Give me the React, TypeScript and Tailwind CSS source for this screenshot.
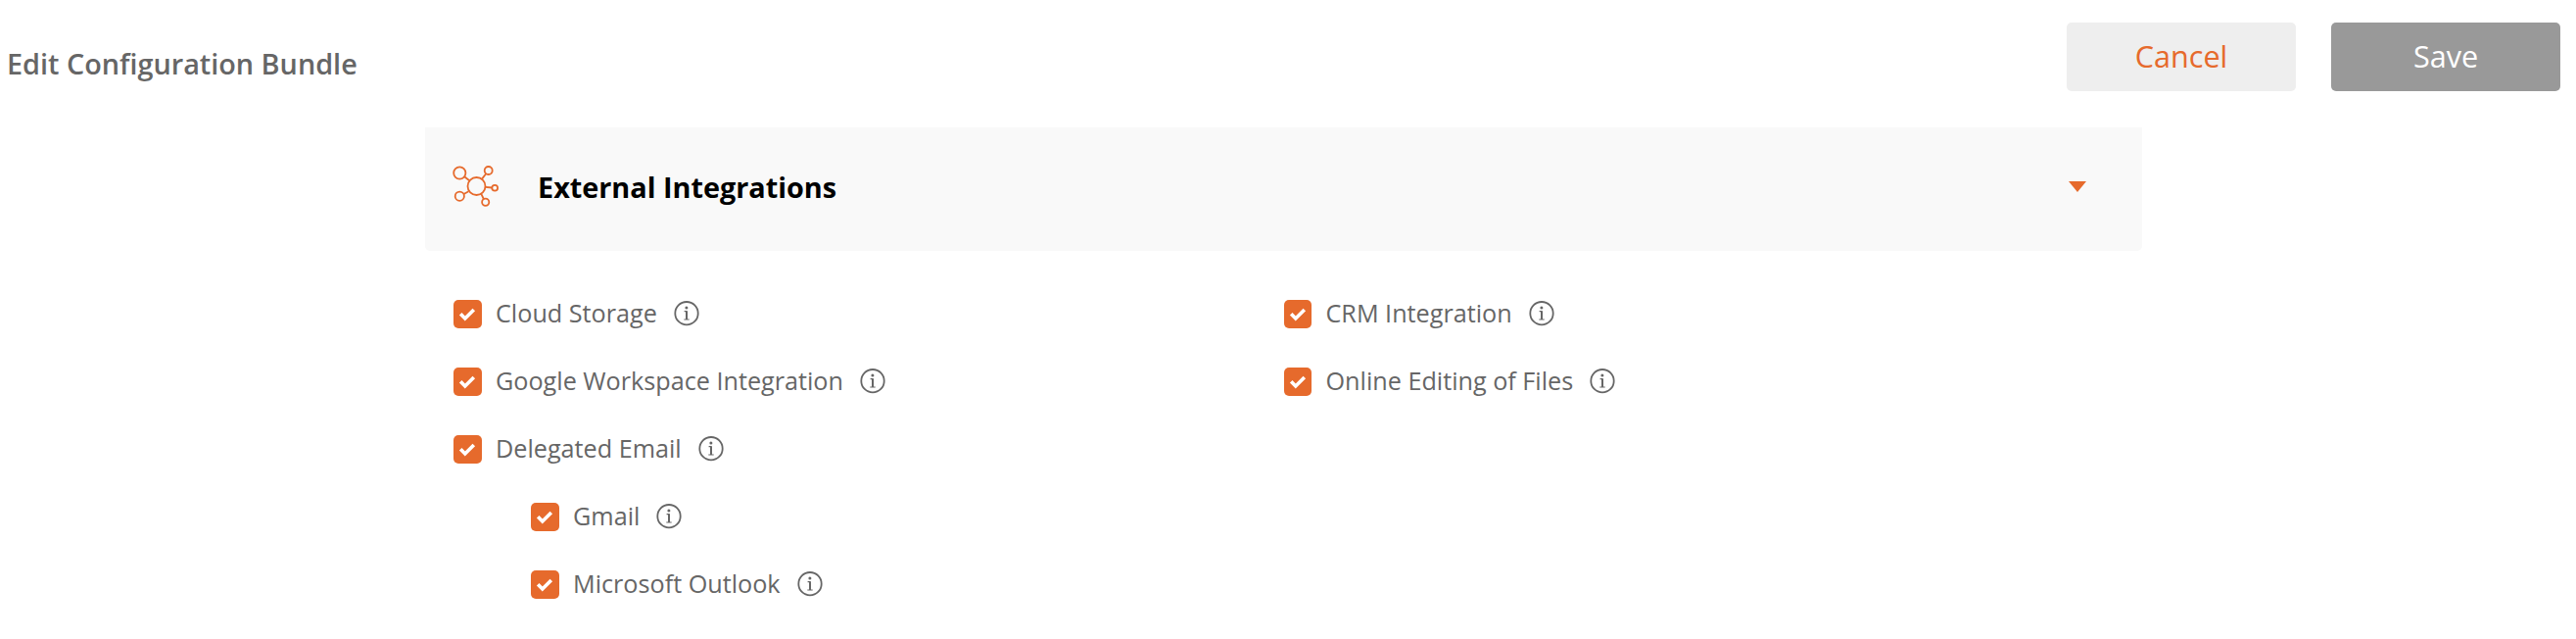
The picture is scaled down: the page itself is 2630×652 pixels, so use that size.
type Feature = { label: string; nested?: boolean };

const leftFeatures: Feature[] = [
  { label: "Cloud Storage" },
  { label: "Google Workspace Integration" },
  { label: "Delegated Email" },
  { label: "Gmail", nested: true },
  { label: "Microsoft Outlook", nested: true },
];

const rightFeatures: Feature[] = [
  { label: "CRM Integration" },
  { label: "Online Editing of Files" },
];

function IntegrationsIcon() {
  return (
    <svg className="mb-[2px]" width="48" height="42" viewBox="0 0 48 42" fill="none" stroke="#e66a2c" strokeWidth="1.8">
      <circle cx="24.5" cy="21" r="9" />
      <circle cx="7.3" cy="7.5" r="6.1" />
      <circle cx="36.7" cy="5" r="4" />
      <circle cx="43.2" cy="22.8" r="2.9" />
      <circle cx="33.7" cy="37.2" r="3.6" />
      <circle cx="7.3" cy="31.2" r="4.6" />
      <path d="M12.2 11.3l5 3.9M34.2 8.2l-4.2 5.4M33.5 21.8l6.8.7M29.2 28.7l2.6 5.3M11.5 29l5-2.7" />
    </svg>
  );
}

function InfoIcon() {
  return (
    <svg className="shrink-0" width="26" height="26" viewBox="0 0 26 26" fill="none" stroke="#666666">
      <circle cx="13" cy="12.7" r="11.7" strokeWidth="1.8" />
      <circle cx="12.9" cy="6.9" r="1.5" fill="#666666" stroke="none" />
      <path d="M13 10.2v8.8" strokeWidth="2" />
      <path d="M10.6 10.6h2.6M10.3 19h5.4" strokeWidth="1.2" />
    </svg>
  );
}

function Checkbox() {
  return (
    <span className="flex h-[29px] w-[28.5px] shrink-0 items-center justify-center rounded-[5px] bg-[#e66a2c]">
      <svg width="18" height="14" viewBox="0 0 18 14" fill="none" stroke="#fff" strokeWidth="3.6">
        <path d="M2.2 6.2l4.6 4.8L15.8 2" />
      </svg>
    </span>
  );
}

function FeatureRow({ label, nested }: Feature) {
  return (
    <div className={nested ? "flex h-[69px] items-center pl-[79px]" : "flex h-[69px] items-center"}>
      <Checkbox />
      <span className="-mt-[3px] ml-[14.5px] text-[25.2px] leading-9 whitespace-nowrap text-[#666666]">{label}</span>
      <span className="-mt-[2px] ml-[17px]">
        <InfoIcon />
      </span>
    </div>
  );
}

export default function App() {
  return (
    <div className="h-[652px] w-full overflow-hidden bg-white font-['Open_Sans',sans-serif]">
      {/* Header */}
      <header className="flex h-[130px] items-start justify-between pt-[23px] pr-4 pl-[7px]">
        <h1 className="mt-[21px] text-[28.8px] leading-[42px] font-semibold text-[#666666]">
          Edit Configuration Bundle
        </h1>
        <div className="flex gap-9">
          <button className="h-[70px] w-[234px] rounded-[5px] bg-[#eeeeee] pb-px text-[30.6px] text-[#e66a2c]">
            Cancel
          </button>
          <button className="h-[70px] w-[234px] rounded-[5px] bg-[#999999] pb-px text-[30.6px] text-white">
            Save
          </button>
        </div>
      </header>

      <section className="ml-[434px] w-[1753px]">
        <div className="flex h-[126px] items-center rounded-b-[5px] bg-[#f9f9f9] pr-[57px] pb-[5px] pl-7">
          <IntegrationsIcon />
          <h2 className="ml-[39px] text-[28.8px] leading-[42px] font-bold text-black">External Integrations</h2>
          <svg className="ml-auto" width="18" height="11" viewBox="0 0 18 11">
            <path d="M0 0h18L9 11z" fill="#e66a2c" />
          </svg>
        </div>

        {/* Features */}
        <div className="flex pt-[30px] pl-[29px]">
          <div className="w-[847.5px]">
            {leftFeatures.map((feature) => (
              <FeatureRow key={feature.label} {...feature} />
            ))}
          </div>
          <div>
            {rightFeatures.map((feature) => (
              <FeatureRow key={feature.label} {...feature} />
            ))}
          </div>
        </div>
      </section>
    </div>
  );
}
